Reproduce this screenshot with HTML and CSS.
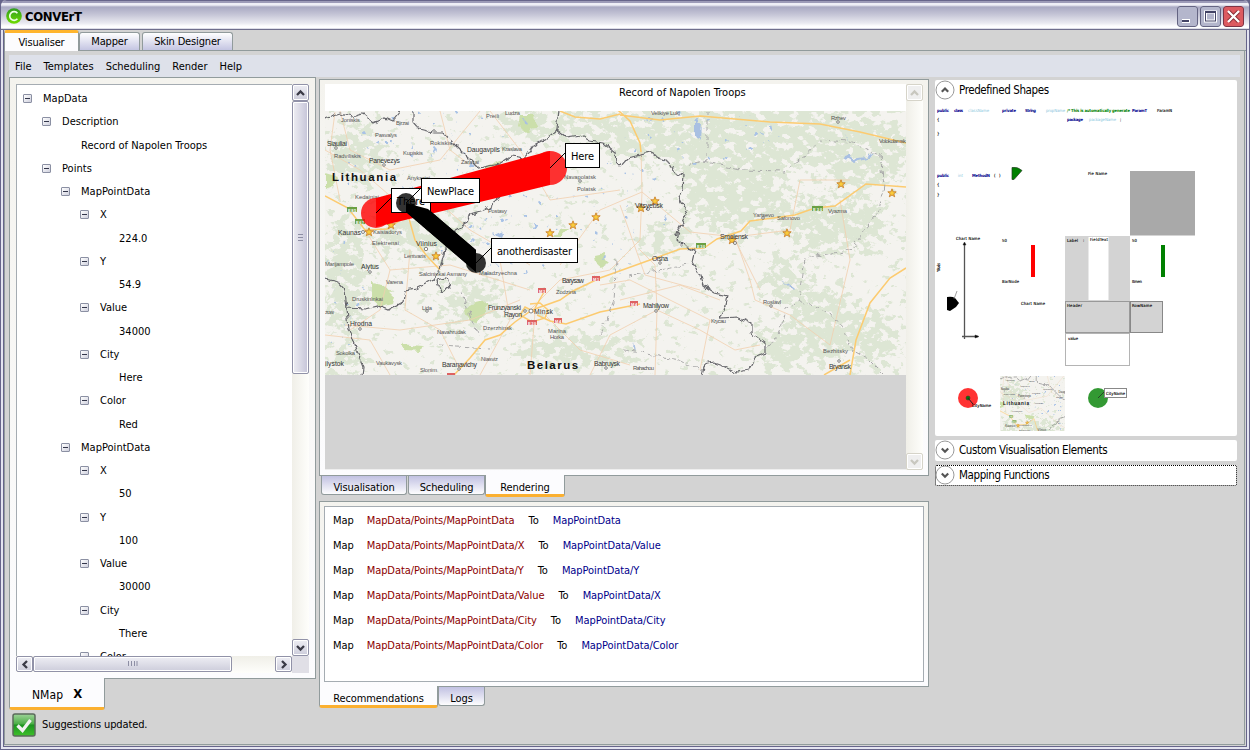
FILE: index.html
```html
<!DOCTYPE html>
<html lang="en">
<head>
<meta charset="utf-8">
<title>CONVErT</title>
<link rel="stylesheet" href="styles.css">
</head>
<body>
<div class="window">
  <header class="titlebar">
    <svg class="logo" viewBox="0 0 16 16"><defs><linearGradient id="lg" x2="0" y2="1"><stop offset="0" stop-color="#2f9c20"/><stop offset="1" stop-color="#6fdc00"/></linearGradient></defs><circle cx="8" cy="8" r="7.8" fill="url(#lg)"/><path d="M11.4 5.3A4.3 4.3 0 1 0 11.4 10.7" fill="none" stroke="#f0ffe8" stroke-width="1.7"/></svg>
    <h1>CONVErT</h1>
    <div class="winbtns">
      <svg viewBox="0 0 21 21"><rect class="wb" x=".5" y=".5" width="20" height="20" rx="2.5"/><rect x="5" y="13" width="8" height="4" fill="#fff"/><rect x="5" y="14" width="7" height="2" fill="#444466"/></svg>
      <svg viewBox="0 0 21 21"><rect class="wb" x=".5" y=".5" width="20" height="20" rx="2.5"/><rect x="5.500" y="6" width="10" height="9" fill="none" stroke="#fff" stroke-width="3"/><rect x="5.500" y="5.500" width="10" height="9.500" fill="none" stroke="#444466"/><path d="M5 6h11" stroke="#444466" stroke-width="2"/></svg>
      <svg viewBox="0 0 21 21"><rect class="wb close" x=".5" y=".5" width="20" height="20" rx="2.500"/><path d="M5.500 5.500l10 10M15.500 5.500l-10 10" stroke="#842c35" stroke-width="4"/><path d="M5 5l11 11M16 5L5 16" stroke="#fff" stroke-width="2.300"/></svg>
    </div>
  </header>
  <nav class="toptabs"><span class="tab on">Visualiser</span><span class="tab t2">Mapper</span><span class="tab t3">Skin Designer</span></nav>
  <main class="page">
    <div class="menubar"><span>File</span><span>Templates</span><span>Scheduling</span><span>Render</span><span>Help</span></div>
    <div class="columns">
      <section class="left">
        <div class="panel leftpanel">
          <div class="tree">
            <div class="l0 node"><i></i>MapData</div>
            <div class="l1 node"><i></i>Description</div>
            <div class="l2">Record of Napolen Troops</div>
            <div class="l1 node"><i></i>Points</div>
            <div class="l2 node"><i></i>MapPointData</div>
            <div class="l3 node"><i></i>X</div>
            <div class="l4">224.0</div>
            <div class="l3 node"><i></i>Y</div>
            <div class="l4">54.9</div>
            <div class="l3 node"><i></i>Value</div>
            <div class="l4">34000</div>
            <div class="l3 node"><i></i>City</div>
            <div class="l4">Here</div>
            <div class="l3 node"><i></i>Color</div>
            <div class="l4">Red</div>
            <div class="l2 node"><i></i>MapPointData</div>
            <div class="l3 node"><i></i>X</div>
            <div class="l4">50</div>
            <div class="l3 node"><i></i>Y</div>
            <div class="l4">100</div>
            <div class="l3 node"><i></i>Value</div>
            <div class="l4">30000</div>
            <div class="l3 node"><i></i>City</div>
            <div class="l4">There</div>
            <div class="l3 node"><i></i>Color</div>
          </div>
          <div class="vscroll">
            <b class="sb"><svg viewBox="0 0 9 6"><path d="M1 5l3.500-3.500L8 5"/></svg></b>
            <b class="thumb v"><svg viewBox="0 0 6 8"><path class="grip" d="M0 .5h5M0 3.500h5M0 6.500h5"/></svg></b>
            <b class="sb end"><svg viewBox="0 0 9 6"><path d="M1 1l3.500 3.500L8 1"/></svg></b>
          </div>
          <div class="hscroll">
            <b class="sb"><svg viewBox="0 0 6 9"><path d="M5 1L1.500 4.500L5 8"/></svg></b>
            <b class="thumb h"><svg viewBox="0 0 10 6"><path class="grip" d="M.5 0v5M3.500 0v5M6.500 0v5M9 0v5"/></svg></b>
            <b class="sb end"><svg viewBox="0 0 6 9"><path d="M1 1l3.500 3.500L1 8"/></svg></b>
          </div>
          <div class="corner"></div>
        </div>
        <div class="btab nmap"><span>NMap</span><strong>X</strong></div>
        <div class="status">
          <svg viewBox="0 0 24 24"><defs><linearGradient id="gg" x2="0" y2="1"><stop offset="0" stop-color="#9fd49a"/><stop offset=".45" stop-color="#4cae47"/><stop offset=".5" stop-color="#1c9420"/><stop offset="1" stop-color="#3fc12a"/></linearGradient></defs><rect x="1" y="1" width="22" height="22" rx="2" fill="url(#gg)" stroke="#5b6b5b" stroke-width="1.500"/><path d="M5.500 12.500l5 5L18.500 7" fill="none" stroke="#f2f2f2" stroke-width="3.300"/></svg>
          <span>Suggestions updated.</span>
        </div>
      </section>
      <section class="middle">
        <div class="panel render">
          <div class="canvas">
            <div class="maptitle">Record of Napolen Troops</div>
            <svg class="map" viewBox="325 111 581 264">
              <defs>
                <filter id="forest" filterUnits="userSpaceOnUse" x="325" y="111" width="581" height="264" color-interpolation-filters="sRGB">
                  <feTurbulence type="fractalNoise" baseFrequency=".11 .14" numOctaves="4" seed="7" result="n"/>
                  <feColorMatrix in="n" values="0 0 0 0 .855 0 0 0 0 .898 0 0 0 0 .827 1 0 0 0 0" result="a"/>
                  <feComposite in="a" in2="SourceGraphic" operator="arithmetic" k2="1" k3=".28" result="s"/>
                  <feColorMatrix in="s" values="0 0 0 0 .865 0 0 0 0 .9 0 0 0 0 .83 0 0 0 14 -9"/>
                </filter>
                <filter id="lakes" filterUnits="userSpaceOnUse" x="325" y="111" width="581" height="264" color-interpolation-filters="sRGB">
                  <feTurbulence type="fractalNoise" baseFrequency=".13" numOctaves="3" seed="21"/>
                  <feColorMatrix values="0 0 0 0 .66 0 0 0 0 .76 0 0 0 0 .9 0 16 0 0 -11.800" result="l"/>
                  <feComposite in="l" in2="SourceAlpha" operator="in"/>
                </filter>
                <filter id="jag" filterUnits="userSpaceOnUse" x="325" y="105" width="590" height="280" color-interpolation-filters="sRGB">
                  <feTurbulence type="fractalNoise" baseFrequency=".16" numOctaves="1" seed="3"/>
                  <feDisplacementMap in="SourceGraphic" scale="8" xChannelSelector="R" yChannelSelector="G"/>
                </filter>
                <filter id="soft" x="-30%" y="-30%" width="160%" height="160%"><feGaussianBlur stdDeviation="9"/></filter>
                <path id="star" d="M0-4.200L1.200-1.200 4.200-1.200 1.800 .8 2.700 3.800 0 2-2.700 3.800-1.800 .8-4.200-1.200-1.200-1.200z"/>
              </defs>
              <g id="mapart">
                <rect x="325" y="111" width="581" height="264" fill="#f4f3ef"/>
                <g filter="url(#forest)"><g filter="url(#soft)">
                  <ellipse cx="740" cy="135" rx="150" ry="35"/><ellipse cx="735" cy="195" rx="55" ry="38"/><ellipse cx="860" cy="150" rx="50" ry="40"/><ellipse cx="835" cy="225" rx="55" ry="28"/><ellipse cx="825" cy="325" rx="35" ry="38"/><ellipse cx="873" cy="340" rx="28" ry="28"/><ellipse cx="780" cy="350" rx="28" ry="22"/><ellipse cx="785" cy="280" rx="25" ry="22"/><ellipse cx="665" cy="240" rx="26" ry="14"/><ellipse cx="565" cy="350" rx="50" ry="16"/><ellipse cx="555" cy="125" rx="65" ry="16"/><ellipse cx="345" cy="275" rx="22" ry="60"/><ellipse cx="425" cy="235" rx="55" ry="20"/><ellipse cx="470" cy="305" rx="28" ry="25"/><ellipse cx="355" cy="155" rx="30" ry="30"/><ellipse cx="345" cy="360" rx="22" ry="14"/><ellipse cx="620" cy="350" rx="18" ry="14"/>
                </g></g>
                <g fill="#cbdfaa" filter="url(#jag)"><path d="M520 115l14 0 4 13-14 4-6-6zM372 283l12 2 10 11-2 8-12 3-8-7zM471 305l17-4-3 11-7 9-8-1-4-9zM568 228l-8 9-7 0 8-10zM595 256l9-2 4 9-6 6-6-5zM401 344l22 2-2 5-16-1zM325 173l14 4-8 10-6 2zM385 205l24 4-4 8-18-5zM482 168l20-8-6 12z"/></g>
                <g filter="url(#lakes)"><ellipse cx="500" cy="220" rx="70" ry="60"/><ellipse cx="700" cy="135" rx="80" ry="30"/><ellipse cx="430" cy="165" rx="90" ry="60"/><ellipse cx="620" cy="215" rx="50" ry="60"/><ellipse cx="340" cy="300" rx="30" ry="60"/></g>
                <g fill="#a9c0e2" filter="url(#jag)"><path d="M695 119l6 4-1 17-5-8zM848 152l5 7 13-2 8-5-3 5-18 5-8-5zM495 235l9-4-3 7zM782 280l12 8-2 2zM523 118l6 7-5-2zM492 231l5 5-4-2zM843 133l7 9-3-3zM634 342l2 10-3-4zM510 259l12 3-10 2z"/></g>
                <g fill="none" stroke="#f1cfae" stroke-width=".8">
                  <path d="M325 150L360 170 395 200 425 190 470 230 530 265M340 111L350 150 390 170 440 160 480 111M365 230L390 270 380 310 350 330M390 270L450 265 530 290M410 250L405 310 440 330 460 370M345 325L400 330 470 320 520 300M530 310L560 280 610 270 640 240 642 192 641 150M642 192L600 210 560 265M642 192L690 232 735 237 750 280 755 300M735 237L790 230 800 180 850 180M640 250L655 265 657 310 655 375M657 310L700 330 735 350 760 345M657 310L610 335 590 375M755 300L790 315 830 345M830 345L850 260 840 200M490 111L520 150 550 200 620 190M535 312L530 375M540 310L580 350 630 365M325 335L370 340 390 375M700 370L710 320 630 280 600 285M735 240L760 290M620 205L645 275 700 290"/>
                  <path d="M335 112L330 150 340 200M440 111L450 150 470 165M425 260L440 255M500 260L510 320 480 375M620 300L680 285 720 300"/>
                </g>
                <g fill="none" stroke="#fccb70" stroke-width="1.500">
                  <path d="M325 196L348 208 365 230 387 229 408 215 415 240 426 255M426 255L440 270M454 375L470 358 485 340 500 335 515 322 532 310 560 300 573 291 600 278 650 260 680 249 704 248 717 239 741 231 750 221 795 215 815 208 835 206 866 184 906 187M535 308L544 292M537 315L550 321 566 324 600 312 640 304M610 103L630 121 640 143 641 152M620 115L660 120 700 116 770 122 820 124 860 132 885 138 906 143M535 312L525 307 520 315 532 322 545 318 548 310 540 303 530 304"/>
                  <path d="M906 268L890 278 870 303 856 340 850 375M850 360L824 375M560 111L575 117 600 119 620 114"/>
                </g>
                <g fill="none" stroke="#aaa" stroke-dasharray="5 3" filter="url(#jag)"><path d="M707 111V160L685 166M703 161L740 170 785 171 805 157 820 140 850 142 880 155 884 185 879 210 850 250 805 258 800 300 785 310 778 335 766 350M800 301L830 313 840 325 852 350 870 360 884 374M440 345L490 348M460 290L478 335M600 335L614 300 617 260M624 350L680 360 703 370M628 275L690 265"/></g>
                <g fill="none" stroke="#66666b" stroke-width="1.200" filter="url(#jag)">
                  <path d="M325 118L340 113 352 116 362 113 374 123 385 118 392 121 400 111M413 111L413 121 420 129 432 132 443 132 455 145 468 158 478 168 500 164 512 156 525 158 534 145 547 138 557 130 559 111M557 130L566 137 580 135 590 141 603 143 614 152 615 162 620 167 628 158 640 155 650 153 660 158 670 163 676 173 684 175 683 190 678 197 687 214 680 228 676 238 686 248 695 250 692 262 700 275 703 285 715 293 727 296 724 310 720 318 737 317 752 324 752 333 766 343 766 353 755 357 748 370 736 372 722 365 714 362 705 364 702 375"/>
                  <path d="M500 198L484 210 470 214 467 223 452 232 446 240 444 255 440 270 432 280 415 288 405 290 403 302 388 310 378 306 366 309 347 308 345 290 338 282 325 279M347 308L349 330 356 350 363 367 362 376M437 280L447 278 450 288 440 292z"/>
                </g>
                <g fill="#f9cb3c" stroke="#c57722" stroke-width=".8">
                  <use href="#star" x="369" y="232"/><use href="#star" x="391" y="225"/><use href="#star" x="436" y="256"/><use href="#star" x="550" y="233"/><use href="#star" x="573" y="225"/><use href="#star" x="596" y="217"/><use href="#star" x="641" y="208"/><use href="#star" x="655" y="201"/><use href="#star" x="732" y="240"/><use href="#star" x="787" y="233"/><use href="#star" x="841" y="184"/><use href="#star" x="892" y="193"/>
                </g>
                <g class="shield"><g fill="#6ba043"><rect x="347" y="207" width="10" height="5"/><rect x="355" y="219" width="10" height="5"/><rect x="696" y="243" width="10" height="5"/><rect x="812" y="206" width="11" height="5"/></g><g fill="#de6262"><rect x="538" y="288" width="8" height="5"/><rect x="592" y="276" width="8" height="5"/><rect x="554" y="318" width="8" height="5"/><rect x="527" y="320" width="10" height="5"/><rect x="630" y="301" width="8" height="5"/><rect x="447" y="373" width="8" height="2"/></g>
                  <text x="348" y="211.500" textLength="8">E85</text><text x="356" y="223.500" textLength="8">E67</text><text x="697" y="247.500" textLength="8">E30</text><text x="813" y="210.500" textLength="9">E30</text><text x="539" y="292.500" textLength="6">M3</text><text x="593" y="280.500" textLength="6">M1</text><text x="555" y="322.500" textLength="6">M4</text><text x="528" y="324.500" textLength="8">E30</text><text x="631" y="305.500" textLength="6">M4</text></g>
                <g fill="#fff" stroke="#555" stroke-width=".7"><circle cx="336" cy="148" r="1.300"/><circle cx="384" cy="165" r="1.300"/><circle cx="363" cy="232" r="1.500"/><circle cx="426" cy="249" r="1.700"/><circle cx="370" cy="272" r="1.300"/><circle cx="427" cy="311" r="1.300"/><circle cx="360" cy="329" r="1.300"/><circle cx="531" cy="311" r="2"/><circle cx="525" cy="311" r="1.300"/><circle cx="459" cy="369" r="1.300"/><circle cx="606" cy="368" r="1.300"/><circle cx="656" cy="311" r="1.300"/><circle cx="648" cy="209" r="1.500"/><circle cx="735" cy="243" r="1.500"/><circle cx="660" cy="263" r="1.300"/><circle cx="771" cy="306" r="1.300"/><circle cx="839" cy="361" r="1.300"/><circle cx="580" cy="181" r="1.300"/><circle cx="838" cy="122" r="1.300"/><circle cx="763" cy="218" r="1.300"/></g>
                <g class="country"><text x="332" y="181" textLength="64">Lithuania</text><text x="527" y="369" textLength="51">Belarus</text></g>
                <g class="city">
                  <text x="327" y="146" textLength="20">Siauliai</text><text x="369" y="163" textLength="31">Panevezys</text><text x="338" y="235" textLength="23">Kaunas</text><text x="416" y="246" textLength="21">Vilnius</text><text x="467" y="152" textLength="33">Daugavpils</text><text x="361" y="269" textLength="18">Alytus</text><text x="350" y="326" textLength="22">Hrodna</text><text x="325" y="366" textLength="19">ilystok</text><text x="442" y="367" textLength="35">Baranavichy</text><text x="488" y="310" textLength="33">Frunzyanski</text><text x="504" y="317" textLength="18">Rayon</text><text x="534" y="314" textLength="19">Minsk</text><text x="562" y="283" textLength="22">Barysaw</text><text x="594" y="366" textLength="26">Babruysk</text><text x="643" y="308" textLength="26">Mahilyow</text><text x="635" y="208" textLength="28">Vitsyebsk</text><text x="720" y="239" textLength="28">Smolensk</text><text x="829" y="369" textLength="22">Bryansk</text><text x="652" y="261" textLength="16">Orsha</text>
                </g>
                <g class="town">
                  <text x="341" y="122" textLength="19">Joniskis</text><text x="396" y="125" textLength="13">Birzai</text><text x="375" y="137" textLength="22">Pasvalys</text><text x="334" y="158" textLength="27">Radviliskis</text><text x="430" y="145" textLength="22">Rokiskis</text><text x="403" y="155" textLength="20">Kupiskis</text><text x="486" y="118" textLength="13">Preili</text><text x="505" y="115" textLength="15">Ludza</text><text x="502" y="151" textLength="20">Kraslava</text><text x="461" y="164" textLength="18">Zarasai</text><text x="407" y="180" textLength="23">Anyksciai</text><text x="355" y="199" textLength="24">Kedainiai</text><text x="373" y="234" textLength="29">Kaisiadorys</text><text x="372" y="245" textLength="27">Elektrenai</text><text x="404" y="258" textLength="22">Lentvaris</text><text x="325" y="266" textLength="29">Marijampole</text><text x="419" y="276" textLength="48">Salcininkai Asmany</text><text x="479" y="275" textLength="38">Maladzyechna</text><text x="386" y="284" textLength="17">Varena</text><text x="352" y="301" textLength="31">Druskininkai</text><text x="422" y="310" textLength="10">Lida</text><text x="437" y="334" textLength="29">Navahrudak</text><text x="336" y="355" textLength="19">Sokolka</text><text x="376" y="365" textLength="26">Vaukavysk</text><text x="420" y="372" textLength="17">Slonim</text><text x="481" y="361" textLength="17">Niasviz</text><text x="483" y="330" textLength="29">Dzerzhinsk</text><text x="548" y="333" textLength="18">Marina</text><text x="550" y="339" textLength="14">Horka</text><text x="556" y="294" textLength="20">Zodzina</text><text x="325" y="314" textLength="9">zow</text><text x="564" y="179" textLength="32">Navapolatsk</text><text x="577" y="191" textLength="19">Polatsk</text><text x="488" y="213" textLength="19">Postavy</text><text x="651" y="115" textLength="29">Velikiye Luki</text><text x="831" y="120" textLength="15">Rzhev</text><text x="879" y="143" textLength="27">Volokolamsk</text><text x="753" y="217" textLength="21">Yartsevo</text><text x="777" y="220" textLength="23">Safonovo</text><text x="828" y="213" textLength="19">Vyazma</text><text x="763" y="304" textLength="18">Roslavl</text><text x="711" y="323" textLength="15">Krycau</text><text x="823" y="353" textLength="25">Bezhitsky</text><text x="633" y="370" textLength="21">Rahachou</text>
                </g>
              </g>
              <g class="troops">
                <path d="M376 198L550 151V185L376 227z" fill="red"/>
                <circle cx="376" cy="213" r="15" fill="red" opacity=".8"/><circle cx="550" cy="168" r="17" fill="red" opacity=".8"/>
                <path d="M406 190L476 250V272L406 212z"/>
                <rect x="391.500" y="188.500" width="39" height="24"/><text x="397" y="205" textLength="28">There</text>
                <path d="M428 209L476 250V272L406 212V203z"/>
                <circle cx="406" cy="203" r="10" opacity=".8"/>
                <circle cx="476" cy="263" r="10" opacity=".8"/>
                <path class="con" d="M376 213l15-15M550 168l15-15M406 203l15-15M476 263l15-15"/>
                <rect x="421.500" y="178.500" width="58" height="24"/><text x="427" y="195" textLength="47">NewPlace</text>
                <rect x="565.500" y="143.500" width="34" height="24"/><text x="571" y="160" textLength="23">Here</text>
                <rect x="491.500" y="238.500" width="86" height="24"/><text x="497" y="255" textLength="75">anotherdisaster</text>
              </g>
            </svg>
          </div>
          <div class="vscroll off">
            <b class="sb"><svg viewBox="0 0 9 6"><path d="M1 5l3.500-3.500L8 5"/></svg></b>
            <b class="sb end"><svg viewBox="0 0 9 6"><path d="M1 1l3.500 3.500L8 1"/></svg></b>
          </div>
        </div>
        <div class="btabs first"><span class="btab s w1">Visualisation</span><span class="btab s w2">Scheduling</span><span class="btab on w3">Rendering</span></div>
        <div class="panel recs">
          <div class="list">
            <p>Map <em>MapData/Points/MapPointData</em> To <u>MapPointData</u></p>
            <p>Map <em>MapData/Points/MapPointData/X</em> To <u>MapPointData/Value</u></p>
            <p>Map <em>MapData/Points/MapPointData/Y</em> To <u>MapPointData/Y</u></p>
            <p>Map <em>MapData/Points/MapPointData/Value</em> To <u>MapPointData/X</u></p>
            <p>Map <em>MapData/Points/MapPointData/City</em> To <u>MapPointData/City</u></p>
            <p>Map <em>MapData/Points/MapPointData/Color</em> To <u>MapPointData/Color</u></p>
          </div>
        </div>
        <div class="btabs"><span class="btab on w4">Recommendations</span><span class="btab s w5">Logs</span></div>
      </section>
      <aside class="right">
        <div class="exp open">
          <h2><svg viewBox="0 0 20 20"><circle cx="10" cy="10" r="9"/><path d="M6.800 11.700L10 8.500l3.200 3.200"/></svg>Predefined Shapes</h2>
          <svg class="shapes" viewBox="935 100 302 336">
            <g class="tiny">
              <g class="kw"><text x="937" y="112" textLength="12">public</text><text x="954" y="112" textLength="9">class</text><text x="1002" y="112" textLength="14">private</text><text x="1025" y="112" textLength="11">String</text><text x="1067" y="121" textLength="16">package</text><text x="1132" y="112" textLength="15">ParamT</text><text x="937" y="177" textLength="12">public</text><text x="972" y="177" textLength="18">MethodN</text></g>
              <g class="nm"><text x="968" y="112" textLength="21">className</text><text x="1046" y="112" textLength="19">propName</text><text x="1089" y="121" textLength="27">packageName</text><text x="958" y="177" textLength="5">int</text></g>
              <text class="cm" x="1067" y="112" textLength="63">/* This is automatically generate</text>
              <text x="1157" y="112" textLength="15">ParamN</text><text x="1120" y="121">;</text><text x="937" y="121">{</text><text x="937" y="135">}</text><text x="994" y="177">(</text><text x="999" y="177">)</text><text x="937" y="186">{</text><text x="937" y="196">}</text>
              <text x="1088" y="175" textLength="19">Pie Name</text>
            </g>
            <path d="M1012 167.500q6-1 10 3l-8 9h-2z" fill="green" stroke="#243c24" stroke-width=".7"/>
            <rect x="1130" y="171" width="65" height="64.500" fill="#a9a9a9"/>
            <rect x="1065" y="236" width="65" height="65" fill="#d3d3d3"/><rect x="1088.500" y="237" width="20" height="63" fill="#fff"/>
            <rect x="1031" y="245" width="4" height="32" fill="red"/><rect x="1161" y="245" width="4" height="32" fill="green"/>
            <rect x="1065.500" y="301.500" width="64" height="31" fill="#d3d3d3" stroke="#999"/><rect x="1130.500" y="301.500" width="32" height="31" fill="#d3d3d3" stroke="#888"/><rect x="1065.500" y="333.500" width="64" height="32" fill="#fff" stroke="#b4b4b4"/>
            <path d="M964.500 243v96M962 336.500h16" fill="none" stroke="#555" stroke-width="1.300"/><path d="M963 245l1.500-3 1.500 3zM975 335l4 1.500-4 1.500z" stroke="#333" stroke-width=".5"/>
            <path d="M947 297q5-1 8 1l4 5-3 4-6 4-3-1z"/><path d="M954 299l3-8" stroke="#777" stroke-width=".7"/>
            <g class="tiny"><text x="956" y="240" textLength="24">Chart Name</text><text x="1002" y="242" textLength="5">50</text><text x="1002" y="283" textLength="17">BarNode</text><text x="1021" y="305" textLength="24">Chart Name</text><text x="1067" y="242" textLength="11">Label</text><text x="1083" y="242">:</text><text x="1090" y="241" textLength="18">FieldText</text><text x="1132" y="242" textLength="5">50</text><text x="1132" y="283" textLength="10">Itmen</text><text x="1067" y="307" textLength="15">Header</text><text x="1132" y="307" textLength="20">RowName</text><text x="1068" y="340" textLength="10">value</text><text transform="translate(940 272) rotate(-90)" textLength="9">YAxis</text></g>
            <circle cx="968" cy="398" r="10" fill="red" opacity=".8"/><circle cx="968" cy="398" r="2" fill="green" stroke="#333" stroke-width=".6"/><path d="M968 398l5 6" stroke="#222"/>
            <circle cx="1098" cy="398" r="10" fill="green" opacity=".8"/><path d="M1098 398l6-6" stroke="#222" stroke-width=".7"/><rect x="1104.500" y="388.500" width="22" height="9" fill="#fff" stroke="#888"/>
            <g class="tiny"><text x="972" y="407" textLength="19">CityName</text><text x="1106" y="395" textLength="19">CityName</text></g>
            <svg x="1000" y="376" width="65" height="55" viewBox="325 111 158 134" preserveAspectRatio="none"><use href="#mapart"/></svg>
          </svg>
        </div>
        <div class="exp"><h2><svg viewBox="0 0 20 20"><circle cx="10" cy="10" r="9"/><path d="M6.800 8.500L10 11.700l3.200-3.200"/></svg>Custom Visualisation Elements</h2></div>
        <div class="exp focus"><h2><svg viewBox="0 0 20 20"><circle cx="10" cy="10" r="9"/><path d="M6.800 8.500L10 11.700l3.200-3.200"/></svg>Mapping Functions</h2></div>
      </aside>
    </div>
  </main>
</div>
</body>
</html>
```
FILE: styles.css
```css
* { box-sizing: border-box; margin: 0; padding: 0; }
body { width: 1250px; height: 750px; overflow: hidden; font: 11px/14px "DejaVu Sans Condensed", "DejaVu Sans", sans-serif; font-stretch: condensed; color: #000; background: #66648a; letter-spacing: -.1px; }
svg { display: block; flex: none; }
b, strong { font-weight: bold; }
em, u, i { font-style: normal; text-decoration: none; }
.window { width: 1250px; height: 750px; display: flex; flex-direction: column; background: #d3d3d3; border: 1px solid #66648a; border-top: 0; border-radius: 6px 6px 0 0; box-shadow: inset 2px 0 #e4e4f0, inset -2px 0 #e4e4f0, inset 0 -2px #e4e4f0, inset 3px 0 #66648a, inset -3px 0 #66648a, inset 0 -3px #66648a; padding: 0 3px 3px; }
.titlebar { height: 30px; margin: 0 -3px; padding: 3px 5px 0 5px; display: flex; align-items: center; gap: 4px; border-radius: 6px 6px 0 0; border-bottom: 1px solid #6f6e8c; background: linear-gradient(#66648a 0 1px, #9d9bb8 1px 3px, #eeeef6 3px 5px, #a9a9c3 7px, #c3c3d5 14px, #e9e9f0 23px, #fdfdfe 26px, #fff 28px, #bbbcd0 29px); }
.logo { width: 16px; height: 16px; }
h1 { font: bold 13px/18px "DejaVu Sans Condensed", "DejaVu Sans", sans-serif; font-stretch: condensed; letter-spacing: -.35px; padding-top: 1px; margin-left: -1px; flex: 1; }
.winbtns { display: flex; gap: 2px; }
.winbtns svg { width: 21px; height: 21px; border-radius: 3px; }
.wb { fill: #b4b6cc; stroke: #646482; }
.wb.close { fill: #dc5a60; stroke: #7d3345; }
.toptabs { height: 21px; display: flex; align-items: flex-end; border-bottom: 1px solid #919b9c; }
.tab { height: 18px; padding-top: 2px; text-align: center; border: 1px solid #919b9c; border-bottom: 0; border-radius: 3px 3px 0 0; background: linear-gradient(#fff, #c4c5e2); letter-spacing: -.15px; }
.tab.on { width: 75px; height: 21px; margin-bottom: -1px; padding-top: 3px; background: #fcfcfe; border-top: 3px solid #ffb52e; }
.t2 { width: 61px; margin-right: 2px; }
.t3 { width: 91px; }
.page { flex: 1; min-height: 0; border: 1px solid #919b9c; border-top: 0; margin-right: 1px; margin-bottom: 1px; padding: 4px 4px 0; display: flex; flex-direction: column; }
.menubar { height: 22px; display: flex; gap: 12px; padding: 5px 6px; background: #dee1ea; letter-spacing: 0; }
.columns { flex: 1; min-height: 0; display: flex; }
.panel { border: 1px solid #919b9c; background: linear-gradient(#f4f3ee, #fcfcfe); }
.left { width: 307px; margin-right: 3px; display: flex; flex-direction: column; }
.leftpanel { height: 602px; padding: 6px; display: grid; grid-template: 572px 17px / 276px 17px; }
.tree { border: solid #a5acb2; border-width: 1px 0 0 1px; background: #fff; overflow: hidden; padding-top: 2px; letter-spacing: .02px; }
.tree > div { height: 23.250px; line-height: 23px; display: flex; align-items: center; }
.tree i { width: 9px; height: 9px; margin-right: 11px; border: 1px solid #8b90a3; border-radius: 1px; background: linear-gradient(#33364a, #33364a) center / 5px 1px no-repeat, linear-gradient(135deg, #fff, #cfd0dd); }
.l0 { padding-left: 6px; }
.l1 { padding-left: 25px; }
.l2 { padding-left: 64px; }
.l2.node { padding-left: 44px; }
.l3 { padding-left: 63px; }
.l4 { padding-left: 102px; }
.vscroll { display: flex; flex-direction: column; background: linear-gradient(90deg, #f0efe8, #fefefb); }
.hscroll { display: flex; background: linear-gradient(#f0efe8, #fefefb); }
.corner { background: #e0dfe6; }
.sb, .thumb { display: flex; align-items: center; justify-content: center; border: 1px solid #9192a8; border-radius: 2px; box-shadow: inset 0 0 0 1px #fff; background: linear-gradient(#eeeef4, #cdcddb); }
.sb { width: 17px; height: 17px; flex: none; }
.sb svg { width: 9px; overflow: visible; }
.hscroll .sb { height: 16px; }
.hscroll .sb svg { width: 6px; }
.sb path { fill: none; stroke: #3a3a46; stroke-width: 2.300; }
.sb.end { margin-left: auto; }
.vscroll .sb.end { margin: auto 0 0; }
.thumb.v { height: 273px; background: linear-gradient(90deg, #eeeef3, #c5c4d8); }
.thumb.h { width: 199px; height: 16px; }
.thumb.v svg { width: 6px; }
.thumb.h svg { width: 10px; }
.grip { stroke: #8d8ea4; fill: none; }
.off .sb { border-color: #d6d4c9; background: #efefef; }
.off .sb path { stroke: #c8c7bf; }
.btab { border: 1px solid #919b9c; border-top: 0; text-align: center; border-radius: 0 0 3px 3px; }
.nmap { width: 96px; height: 32px; margin-top: -1px; padding-top: 9px; display: flex; justify-content: center; gap: 10px; background: #fcfcfe; border-bottom: 3px solid #fbb030; }
.nmap span { padding: 1px 0 0; font-size: 12px; letter-spacing: .1px; }
.nmap strong { font-size: 13px; line-height: 13px; }
.status { display: flex; align-items: center; padding: 3px 0 0 3px; gap: 6px; letter-spacing: -.13px; }
.status svg { width: 24px; height: 24px; }
.middle { width: 610px; padding-top: 2px; margin-right: 6px; }
.render { height: 397px; padding: 4px 5px; display: flex; }
.canvas { width: 581px; height: 386px; background: #d3d3d3; border-bottom: 1px solid #eee; }
.maptitle { height: 27px; background: #fff; padding: 2px 0 0 294px; letter-spacing: .04px; }
.map { width: 581px; height: 264px; }
.off { width: 17px; height: 386px; }
.btabs { display: flex; }
.first { height: 25px; padding-left: 2px; }
.btab.s { height: 19px; padding-top: 5px; background: linear-gradient(#c1c1e2, #fdfdfe); }
.btab.on { background: #fcfcfe; border-bottom: 3px solid #fbb030; margin-top: -1px; padding-top: 6px; }
.w1 { width: 86px; margin-right: 1px; }
.w2 { width: 77px; }
.btab.w3 { width: 80px; height: 22px; }
.btab.w4 { width: 119px; height: 22px; }
.w5 { width: 47px; }
.recs { height: 186px; padding: 4px; }
.list { height: 176px; border: 1px solid #a5acb2; background: #fff; padding: 1px 8px; letter-spacing: -.08px; }
.list p { height: 25px; line-height: 25px; }
.list em { color: #8b0000; margin: 0 11px 0 10px; }
.list u { color: #00008b; margin-left: 11px; }
.right { width: 302px; padding-top: 3px; display: flex; flex-direction: column; gap: 4px; }
.exp { height: 21px; border-radius: 2px; background: #fff; }
.exp.open { height: 356px; }
h2 { height: 20px; padding-left: 1px; display: flex; align-items: center; gap: 4px; font: 11.500px/20px "DejaVu Sans Condensed", "DejaVu Sans", sans-serif; font-stretch: condensed; letter-spacing: -.4px; }
h2 svg { width: 20px; height: 20px; margin-left: -1px; }
h2 circle { fill: #fff; stroke: #999; }
h2 path { fill: none; stroke: #555; stroke-width: 2.200; }
.focus { border: 1px dotted #000; }
.focus h2 { margin: -1px 0 0 -1px; }
.shapes { width: 302px; height: 336px; }
.tiny { font-size: 4.200px; letter-spacing: 0; }
.tiny text { stroke: currentColor; stroke-width: .12; }
.tiny g text, .tiny .cm { stroke: none; }
.kw { fill: #00008b; font-weight: bold; }
.nm { fill: #87c5dc; }
.cm { fill: green; font-weight: bold; }
.country { font: bold 11.500px "Liberation Sans", sans-serif; fill: #111; }
.city { font: 6.800px "Liberation Sans", sans-serif; fill: #333; letter-spacing: 0; }
.town { font: 5.800px "Liberation Sans", sans-serif; fill: #555; letter-spacing: 0; }
.shield { font: bold 4px "Liberation Sans", sans-serif; }
.shield text { fill: #fff; }
.troops rect { fill: #fff; stroke: #000; }
.troops text { font-size: 11px; letter-spacing: 0; }
.con { stroke: #000; fill: none; }
```
